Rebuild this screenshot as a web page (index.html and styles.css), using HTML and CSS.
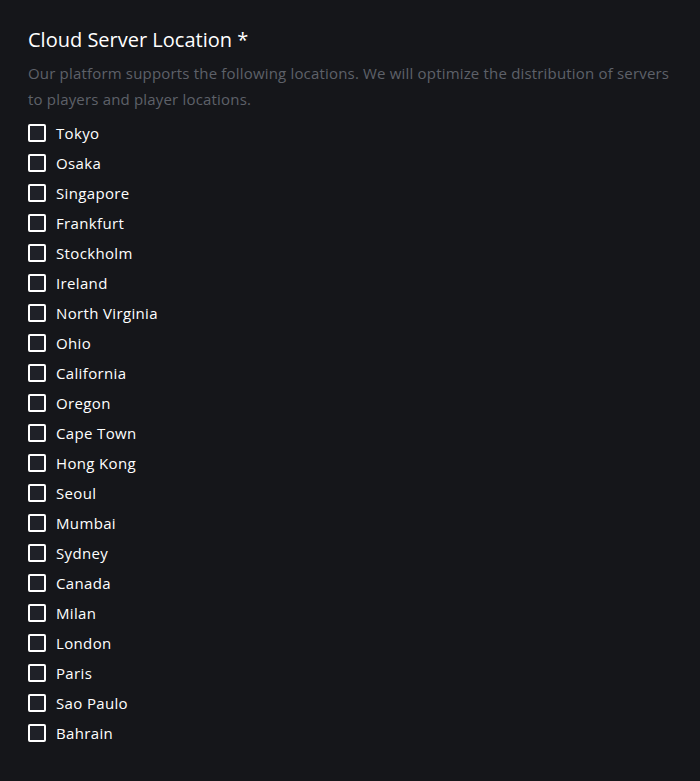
FILE: index.html
```html
<!DOCTYPE html>
<html>
<head>
<meta charset="utf-8">
<link rel="stylesheet" href="styles.css">
</head>
<body>
<div class="field">
  <h2 class="title">Cloud Server Location *</h2>
  <p class="desc">Our platform supports the following locations. We will optimize the distribution of servers to players and player locations.</p>
  <div class="options">
    <label class="opt"><input type="checkbox"><span class="box"></span><span>Tokyo</span></label>
    <label class="opt"><input type="checkbox"><span class="box"></span><span>Osaka</span></label>
    <label class="opt"><input type="checkbox"><span class="box"></span><span>Singapore</span></label>
    <label class="opt"><input type="checkbox"><span class="box"></span><span>Frankfurt</span></label>
    <label class="opt"><input type="checkbox"><span class="box"></span><span>Stockholm</span></label>
    <label class="opt"><input type="checkbox"><span class="box"></span><span>Ireland</span></label>
    <label class="opt"><input type="checkbox"><span class="box"></span><span>North Virginia</span></label>
    <label class="opt"><input type="checkbox"><span class="box"></span><span>Ohio</span></label>
    <label class="opt"><input type="checkbox"><span class="box"></span><span>California</span></label>
    <label class="opt"><input type="checkbox"><span class="box"></span><span>Oregon</span></label>
    <label class="opt"><input type="checkbox"><span class="box"></span><span>Cape Town</span></label>
    <label class="opt"><input type="checkbox"><span class="box"></span><span>Hong Kong</span></label>
    <label class="opt"><input type="checkbox"><span class="box"></span><span>Seoul</span></label>
    <label class="opt"><input type="checkbox"><span class="box"></span><span>Mumbai</span></label>
    <label class="opt"><input type="checkbox"><span class="box"></span><span>Sydney</span></label>
    <label class="opt"><input type="checkbox"><span class="box"></span><span>Canada</span></label>
    <label class="opt"><input type="checkbox"><span class="box"></span><span>Milan</span></label>
    <label class="opt"><input type="checkbox"><span class="box"></span><span>London</span></label>
    <label class="opt"><input type="checkbox"><span class="box"></span><span>Paris</span></label>
    <label class="opt"><input type="checkbox"><span class="box"></span><span>Sao Paulo</span></label>
    <label class="opt"><input type="checkbox"><span class="box"></span><span>Bahrain</span></label>
  </div>
</div>
</body>
</html>
```
FILE: styles.css
```css
html, body {
  margin: 0;
  padding: 0;
  background: #15161a;
}
body {
  font-family: "Open Sans", "DejaVu Sans", sans-serif;
  color: #ffffff;
}
.field {
  padding: 26px 20px 28px 28px;
}
.title {
  margin: 0;
  font-size: 20px;
  font-weight: 400;
  line-height: 28px;
  color: #ffffff;
}
.desc {
  margin: 6px 0 0 0;
  font-size: 15px;
  line-height: 26px;
  color: #5e6169;
  letter-spacing: 0.18px;
}
.options {
  margin-top: 6px;
  display: flex;
  flex-direction: column;
}
.opt {
  display: flex;
  align-items: center;
  height: 30px;
  font-size: 15px;
  letter-spacing: 0.35px;
  color: #ffffff;
}
.opt input {
  display: none;
}
.box {
  width: 14px;
  height: 14px;
  border: 2px solid #ffffff;
  border-radius: 2px;
  background: #1f2128;
  margin-right: 10px;
  flex: none;
}
```
